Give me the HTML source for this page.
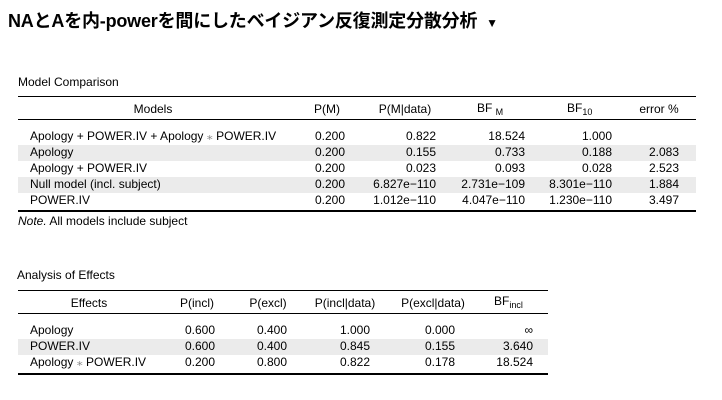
<!DOCTYPE html><html><head><meta charset="utf-8"><style>
body{margin:0;width:722px;height:400px;background:#fff;font-family:"Liberation Sans","Noto Sans CJK JP",sans-serif;color:#000;position:relative;overflow:hidden}
.a{position:absolute;white-space:nowrap;font-size:12px;line-height:16px}
.r{text-align:right}
.c{text-align:center}
.l{position:absolute;background:#000}
.sh{position:absolute;background:#ebebeb}
sub{font-size:9px;vertical-align:-3px}
</style></head><body>
<div class="a" style="left:8px;top:8px;font-size:18px;line-height:26px;font-weight:bold;letter-spacing:-0.2px">NAとAを内-powerを間にしたベイジアン反復測定分散分析 <span style="font-size:12px;margin-left:4px">▼</span></div>

<div class="a" style="left:18px;top:74px">Model Comparison</div>
<div class="l" style="left:18px;top:96px;width:678px;height:1px"></div>
<div class="l" style="left:18px;top:119px;width:678px;height:1px"></div>
<div class="sh" style="left:18px;top:145px;width:678px;height:16px"></div>
<div class="sh" style="left:18px;top:177px;width:678px;height:16px"></div>
<div class="l" style="left:18px;top:210px;width:678px;height:2px"></div>
<div class="a c" style="left:103px;width:100px;top:101px">Models</div>
<div class="a c" style="left:297px;width:60px;top:101px">P(M)</div>
<div class="a c" style="left:355px;width:100px;top:101px">P(M|data)</div>
<div class="a c" style="left:619px;width:80px;top:101px">error %</div>
<div class="a" style="left:477px;top:100px">BF <sub>M</sub></div>
<div class="a" style="left:567px;top:100px">BF<sub>10</sub></div>

<div class="a" style="left:30px;top:128px">Apology + POWER.IV + Apology <span style="color:#888">⁎</span> POWER.IV</div>
<div class="a" style="left:30px;top:144px">Apology</div>
<div class="a" style="left:30px;top:160px">Apology + POWER.IV</div>
<div class="a" style="left:30px;top:176px">Null model (incl. subject)</div>
<div class="a" style="left:30px;top:192px">POWER.IV</div>
<div class="a r" style="right:377px;top:128px">0.200<br>0.200<br>0.200<br>0.200<br>0.200</div>
<div class="a r" style="right:286px;top:128px">0.822<br>0.155<br>0.023<br>6.827e−110<br>1.012e−110</div>
<div class="a r" style="right:197px;top:128px">18.524<br>0.733<br>0.093<br>2.731e−109<br>4.047e−110</div>
<div class="a r" style="right:110px;top:128px">1.000<br>0.188<br>0.028<br>8.301e−110<br>1.230e−110</div>
<div class="a r" style="right:43px;top:128px">&nbsp;<br>2.083<br>2.523<br>1.884<br>3.497</div>
<div class="a" style="left:18px;top:213px"><i>Note.</i> All models include subject</div>

<div class="a" style="left:17px;top:267px">Analysis of Effects</div>
<div class="l" style="left:18px;top:290px;width:530px;height:1px"></div>
<div class="l" style="left:18px;top:313px;width:530px;height:1px"></div>
<div class="sh" style="left:18px;top:339px;width:530px;height:16px"></div>
<div class="l" style="left:18px;top:373px;width:530px;height:2px"></div>
<div class="a c" style="left:49px;width:80px;top:295px">Effects</div>
<div class="a c" style="left:167px;width:60px;top:295px">P(incl)</div>
<div class="a c" style="left:238px;width:60px;top:295px">P(excl)</div>
<div class="a c" style="left:295px;width:100px;top:295px">P(incl|data)</div>
<div class="a c" style="left:383px;width:100px;top:295px">P(excl|data)</div>
<div class="a" style="left:494px;top:293px">BF<sub>incl</sub></div>
<div class="a" style="left:30px;top:322px">Apology<br>POWER.IV<br>Apology <span style="color:#888">⁎</span> POWER.IV</div>
<div class="a r" style="right:507px;top:322px">0.600<br>0.600<br>0.200</div>
<div class="a r" style="right:435px;top:322px">0.400<br>0.400<br>0.800</div>
<div class="a r" style="right:352px;top:322px">1.000<br>0.845<br>0.822</div>
<div class="a r" style="right:267px;top:322px">0.000<br>0.155<br>0.178</div>
<div class="a r" style="right:189px;top:322px">∞<br>3.640<br>18.524</div>
</body></html>
